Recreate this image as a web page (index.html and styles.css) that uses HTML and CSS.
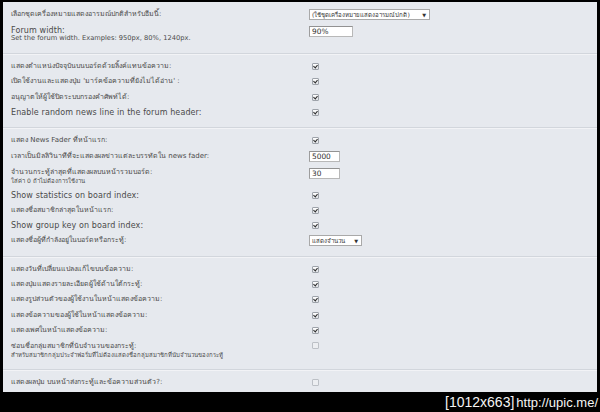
FILE: index.html
```html
<!DOCTYPE html>
<html>
<head>
    <meta charset="UTF-8">
    <title>ตั้งค่าบอร์ด</title>
    <link rel="stylesheet" href="styles.css">
</head>
<body>

<div class="panel">

    <!-- ธีม / ความกว้าง -->
    <div class="section">
        <div class="row">
            <div class="label th">เลือกชุดเครื่องหมายแสดงอารมณ์ปกติสำหรับธีมนี้:</div>
            <div class="value"><span class="select wide">(ใช้ชุดเครื่องหมายแสดงอารมณ์ปกติ)<i>▼</i></span></div>
        </div>
        <div class="row two">
            <div class="label">Forum width:<small>Set the forum width. Examples: 950px, 80%, 1240px.</small></div>
            <div class="value"><input type="text" class="box w44" value="90%"></div>
        </div>
    </div>

    <div class="section">
        <div class="row">
            <div class="label th">แสดงตำแหน่งปัจจุบันบนบอร์ดด้วยลิ้งค์แทนข้อความ:</div>
            <div class="value"><span class="cb on"></span></div>
        </div>
        <div class="row">
            <div class="label th">เปิดใช้งานและแสดงปุ่ม 'มาร์คข้อความที่ยังไม่ได้อ่าน' :</div>
            <div class="value"><span class="cb on"></span></div>
        </div>
        <div class="row">
            <div class="label th">อนุญาตให้ผู้ใช้ปิดระบบกรองคำศัพท์ได้:</div>
            <div class="value"><span class="cb on"></span></div>
        </div>
        <div class="row">
            <div class="label">Enable random news line in the forum header:</div>
            <div class="value"><span class="cb on"></span></div>
        </div>
    </div>

    <div class="section">
        <div class="row">
            <div class="label th">แสดง News Fader ที่หน้าแรก:</div>
            <div class="value"><span class="cb on"></span></div>
        </div>
        <div class="row">
            <div class="label th">เวลาเป็นมิลลิวินาทีที่จะแสดงผลข่าวแต่ละบรรทัดใน news fader:</div>
            <div class="value"><input type="text" class="box w31" value="5000"></div>
        </div>
        <div class="row two">
            <div class="label th">จำนวนกระทู้ล่าสุดที่แสดงผลบนหน้ารวมบอร์ด:<small>ใส่ค่า 0 ถ้าไม่ต้องการใช้งาน</small></div>
            <div class="value"><input type="text" class="box w31" value="30"></div>
        </div>
        <div class="row">
            <div class="label">Show statistics on board index:</div>
            <div class="value"><span class="cb on"></span></div>
        </div>
        <div class="row">
            <div class="label th">แสดงชื่อสมาชิกล่าสุดในหน้าแรก:</div>
            <div class="value"><span class="cb on"></span></div>
        </div>
        <div class="row">
            <div class="label">Show group key on board index:</div>
            <div class="value"><span class="cb on"></span></div>
        </div>
        <div class="row">
            <div class="label th">แสดงชื่อผู้ที่กำลังอยู่ในบอร์ดหรือกระทู้:</div>
            <div class="value"><span class="select">แสดงจำนวน<i>▼</i></span></div>
        </div>
    </div>

    <div class="section">
        <div class="row">
            <div class="label th">แสดงวันที่เปลี่ยนแปลงแก้ไขบนข้อความ:</div>
            <div class="value"><span class="cb on"></span></div>
        </div>
        <div class="row">
            <div class="label th">แสดงปุ่มแสดงรายละเอียดผู้ใช้ด้านใต้กระทู้:</div>
            <div class="value"><span class="cb on"></span></div>
        </div>
        <div class="row">
            <div class="label th">แสดงรูปส่วนตัวของผู้ใช้งานในหน้าแสดงข้อความ:</div>
            <div class="value"><span class="cb on"></span></div>
        </div>
        <div class="row">
            <div class="label th">แสดงข้อความของผู้ใช้ในหน้าแสดงข้อความ:</div>
            <div class="value"><span class="cb on"></span></div>
        </div>
        <div class="row">
            <div class="label th">แสดงเพศในหน้าแสดงข้อความ:</div>
            <div class="value"><span class="cb on"></span></div>
        </div>
        <div class="row two">
            <div class="label th">ซ่อนชื่อกลุ่มสมาชิกที่นับจำนวนของกระทู้:<small>สำหรับสมาชิกกลุ่มประจำฟอรั่มที่ไม่ต้องแสดงชื่อกลุ่มสมาชิกที่นับจำนวนของกระทู้</small></div>
            <div class="value"><span class="cb"></span></div>
        </div>
    </div>

    <div class="section last">
        <div class="row">
            <div class="label th">แสดงผลปุ่ม บนหน้าส่งกระทู้และข้อความส่วนตัว?:</div>
            <div class="value"><span class="cb"></span></div>
        </div>
    </div>

</div>

<div class="stamp">[1012x663]<span class="url">http://upic.me/</span></div>

</body>
</html>
```

FILE: styles.css
```css
html, body {margin: 0; background: #000;}
body {width: 600px; height: 412px; overflow: hidden; font-family: "DejaVu Sans", Verdana, sans-serif; color: #474747;}

.panel {margin: 2px 3px 0 3px; height: 390px; background: #e6e9ee; overflow: hidden;}

.section {padding: 5px 0 7px 0; border-bottom: 1px solid #d2d6dc; box-shadow: 0 1px 0 #f2f3f6;}
.section.last {border-bottom: none; box-shadow: none;}

.row {display: grid; grid-template-columns: 306px 1fr; height: 15.3px; align-items: center;}
.row.two {height: 23.7px; align-items: start; padding-top: 4px; box-sizing: border-box;}

.label {padding-left: 8px; font-size: 8px; letter-spacing: 0.1px; line-height: 9px; white-space: nowrap; color: #4a4a4a;}
.label.th {font-family: Tahoma, "DejaVu Sans", sans-serif; font-size: 7px; letter-spacing: 0;}
.label small {display: block; font-size: 6.7px; letter-spacing: 0; line-height: 7px;}
.label.th small {font-size: 6px;}

.value {display: flex; align-items: center;}

.box {box-sizing: border-box; height: 11px; margin: 0; padding: 0 2px; border: 1px solid #b8b8b8; border-top-color: #929292; border-left-color: #9d9d9d; background: #fff; font-family: "DejaVu Sans", Verdana, sans-serif; font-size: 7.4px; color: #333; outline: none;}
.w44 {width: 44px;}
.w31 {width: 31px;}

.select {box-sizing: border-box; height: 11px; display: inline-flex; align-items: center; padding: 0 3px 0 2px; border: 1px solid #a9a9a9; background: #fff; font-family: Tahoma, "DejaVu Sans", sans-serif; font-size: 6.1px; color: #333; white-space: nowrap;}
.select i {font-style: normal; font-size: 5px; margin-left: auto; padding-left: 4px;}
.select.wide {width: 121px;}
.select:not(.wide) {width: 53px;}

.cb {width: 7px; height: 7px; margin-left: 3px; box-sizing: border-box; border: 1px solid #9ea3aa; border-radius: 1px; background: linear-gradient(#ffffff, #dfe2e6); position: relative;}
.cb.on::after {content: ""; position: absolute; left: 1px; top: 0; width: 2px; height: 3px; border: solid #2b2b2b; border-width: 0 1.4px 1.4px 0; transform: rotate(40deg);}
.cb:not(.on) {border-color: #bcc0c6; background: #eceef1;}

.stamp {height: 20px; display: flex; justify-content: flex-end; align-items: center; padding-right: 2px; color: #f4f4f4; font-family: "Liberation Sans", Arial, sans-serif; font-size: 14px;}
.stamp .url {margin-left: 2px; font-size: 13px;}
```
